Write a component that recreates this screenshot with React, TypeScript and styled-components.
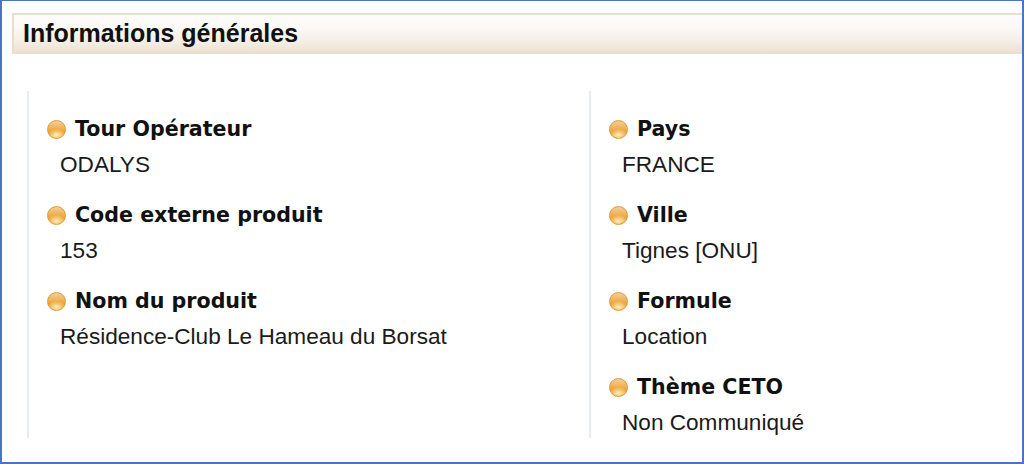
import React from "react";
import styled, { createGlobalStyle } from "styled-components";

const Global = createGlobalStyle`
  html, body { margin: 0; padding: 0; background: #ffffff; }
  body { width: 1024px; height: 464px; overflow: hidden; }
`;

const Frame = styled.div`
  box-sizing: border-box;
  width: 1024px;
  height: 464px;
  border-style: solid;
  border-color: #4a75c2;
  border-width: 1px 2px 2px 2px;
  background: #ffffff;
  padding-top: 12px;
  display: flex;
  flex-direction: column;
  overflow: hidden;
`;

const Header = styled.div`
  box-sizing: border-box;
  margin-left: 10px;
  height: 41px;
  border: 2px solid #ebdfcb;
  border-right: none;
  background: linear-gradient(to bottom, #fdfcfa 0%, #fbf9f5 35%, #f3ede3 75%, #ece2d2 100%);
  display: flex;
  align-items: center;
  padding-left: 9px;
`;

const Title = styled.h1`
  margin: 0;
  font-family: "Liberation Sans", Arial, sans-serif;
  font-weight: bold;
  font-size: 25px;
  color: #111111;
`;

const Columns = styled.div`
  display: grid;
  grid-template-columns: 562px 1fr;
  padding-left: 25px;
  margin-top: 37px;
`;

const Column = styled.div`
  border-left: 2px solid #e2ebf7;
  padding: 25px 0 2px 0;
  display: flex;
  flex-direction: column;
  gap: 24px;
`;

const Field = styled.div`
  display: flex;
  flex-direction: column;
`;

const Label = styled.div`
  display: flex;
  align-items: center;
  height: 26px;
  padding-left: 18px;
  gap: 9px;
  font-family: "DejaVu Sans", Verdana, sans-serif;
  font-weight: bold;
  font-size: 20.6px;
  color: #111111;
`;

const Bullet = styled.span`
  width: 19px;
  height: 19px;
  border-radius: 50%;
  flex: none;
  box-sizing: border-box;
  border: 1px solid #dc9a3e;
  background:
    radial-gradient(ellipse 55% 35% at 50% 82%, #fff1c2 0%, rgba(255, 232, 170, 0.6) 45%, rgba(255, 220, 150, 0) 100%),
    linear-gradient(to bottom, #f1cf9a 0%, #f0b458 40%, #eb9d2c 70%, #f3b24a 100%);
`;

const Value = styled.div`
  height: 26px;
  line-height: 26px;
  margin-top: 10px;
  padding-left: 31px;
  font-family: "Liberation Sans", Arial, sans-serif;
  font-size: 22.6px;
  color: #1a1a1a;
`;

type Item = { label: string; value: string };

const left: Item[] = [
  { label: "Tour Opérateur", value: "ODALYS" },
  { label: "Code externe produit", value: "153" },
  { label: "Nom du produit", value: "Résidence-Club Le Hameau du Borsat" },
];

const right: Item[] = [
  { label: "Pays", value: "FRANCE" },
  { label: "Ville", value: "Tignes [ONU]" },
  { label: "Formule", value: "Location" },
  { label: "Thème CETO", value: "Non Communiqué" },
];

const FieldList = ({ items }: { items: Item[] }) => (
  <Column>
    {items.map((it) => (
      <Field key={it.label}>
        <Label>
          <Bullet />
          {it.label}
        </Label>
        <Value>{it.value}</Value>
      </Field>
    ))}
  </Column>
);

export default function App() {
  return (
    <>
      <Global />
      <Frame>
        <Header>
          <Title>Informations générales</Title>
        </Header>
        <Columns>
          <FieldList items={left} />
          <FieldList items={right} />
        </Columns>
      </Frame>
    </>
  );
}
